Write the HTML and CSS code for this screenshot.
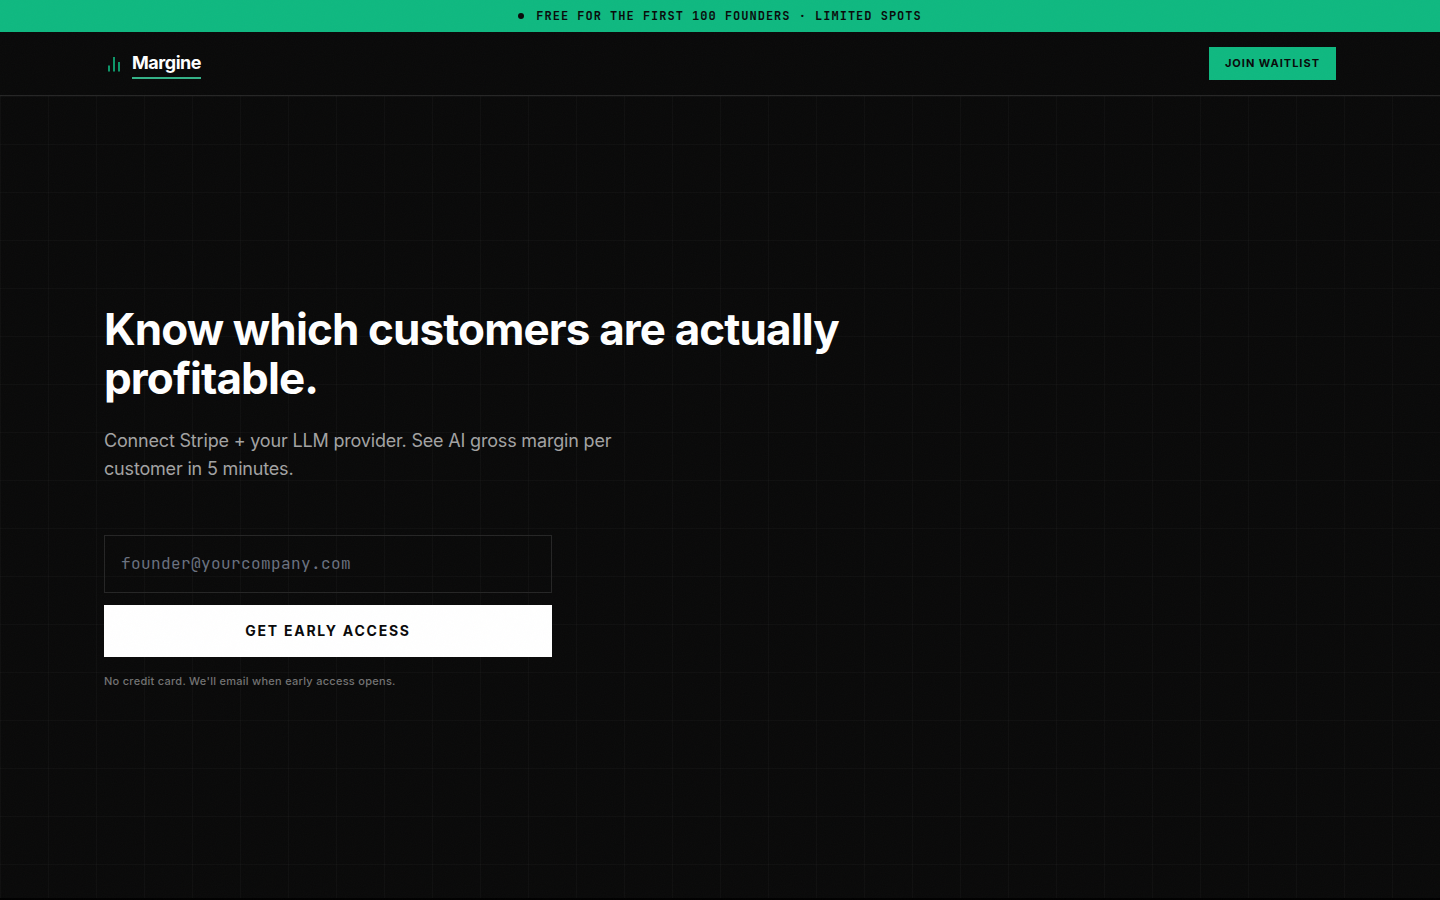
FILE: index.html
```
<!DOCTYPE html>
<html lang="en">
<head>
  <meta charset="UTF-8">
  <meta name="viewport" content="width=device-width, initial-scale=1.0">
  <title>Margine</title>
  <link rel="stylesheet" href="styles.css">
</head>
<body>

<div class="banner">
  <span class="dot"></span>
  <span>Free for the first 100 founders · Limited spots</span>
</div>

<header class="nav">
  <div class="container nav-inner">
    <a href="#" class="logo">
      <svg class="logo-icon" width="20" height="20" viewBox="0 0 20 20" aria-hidden="true">
        <path d="M5 11.500v6M10 3v14.500M15 8v9.500" fill="none" stroke="currentColor" stroke-width="2"/>
      </svg>
      <span class="logo-text">Margine</span>
    </a>
    <a href="#waitlist" class="nav-cta">Join waitlist</a>
  </div>
</header>

<main class="hero">
  <div class="container">
    <h1>Know which customers are actually profitable.</h1>
    <p class="lead">Connect Stripe + your LLM provider. See AI gross margin per customer in 5 minutes.</p>
    <form id="waitlist" class="waitlist">
      <input type="email" placeholder="founder@yourcompany.com" aria-label="Work email" required>
      <button type="submit">Get early access</button>
      <p class="note">No credit card. We'll email when early access opens.</p>
    </form>
  </div>
</main>

<!-- film grain over the whole page -->
<svg class="grain" aria-hidden="true">
  <filter id="noise">
    <feTurbulence type="fractalNoise" baseFrequency="0.9" numOctaves="4" stitchTiles="stitch"/>
  </filter>
  <rect width="100%" height="100%" filter="url(#noise)"/>
</svg>

</body>
</html>
```

FILE: styles.css
```
* { box-sizing: border-box; }
body {
  margin: 0;
  background: #000;
  color: #fff;
  font-family: Inter, sans-serif;
  overflow-x: hidden;
}
.container {
  width: 100%;
  max-width: 1280px;
  margin: 0 auto;
  padding: 0 24px;
}

.banner {
  display: flex;
  align-items: center;
  justify-content: center;
  gap: 12px;
  padding: 8px 16px;
  background: #10b981;
  color: #0a0a0a;
  font-family: "JetBrains Mono", "Liberation Mono", monospace;
  font-size: 12px;
  line-height: 16px;
  font-weight: 700;
  letter-spacing: 1px;
  text-transform: uppercase;
}
.dot {
  width: 6px;
  height: 6px;
  border-radius: 50%;
  background: #0a0a0a;
}

.nav {
  background: #0a0a0a;
  border-bottom: 1px solid #262626;
}
.nav-inner {
  display: flex;
  align-items: center;
  justify-content: space-between;
  height: 63px;
}
.logo {
  display: flex;
  align-items: center;
  gap: 8px;
  color: #fff;
  text-decoration: none;
}
.logo-icon {
  color: #10b981;
  opacity: 0.8;
}
.logo-text {
  border-bottom: 2px solid #34b388;
  font-size: 18px;
  line-height: 28px;
  font-weight: 700;
  letter-spacing: -0.025em;
}
.nav-cta {
  padding: 8px 16px;
  background: #10b981;
  color: #0a0a0a;
  font-size: 11px;
  line-height: 17px;
  font-weight: 700;
  letter-spacing: 1px;
  text-transform: uppercase;
  text-decoration: none;
}

.hero {
  display: flex;
  align-items: center;
  min-height: calc(100vh - 98px);
  background-color: #0a0a0a;
  background-image:
    linear-gradient(to right, rgba(255, 255, 255, 0.025) 1px, transparent 1px),
    linear-gradient(to bottom, rgba(255, 255, 255, 0.025) 1px, transparent 1px);
  background-size: 48px 48px;
}
h1 {
  max-width: 768px;
  margin: 0 0 24px;
  font-size: 44px;
  line-height: 49px;
  font-weight: 700;
  letter-spacing: -0.02em;
}
.lead {
  max-width: 576px;
  margin: 0 0 52px;
  color: #a3a3a3;
  font-size: 18px;
  line-height: 28px;
  letter-spacing: -0.01em;
}
.waitlist {
  display: flex;
  flex-direction: column;
  gap: 12px;
  max-width: 448px;
}
.waitlist input {
  height: 58px;
  padding: 0 16px 2px;
  background: transparent;
  border: 1px solid #262626;
  border-radius: 0;
  color: #fff;
  font-family: "JetBrains Mono", "Liberation Mono", monospace;
  font-size: 16px;
  letter-spacing: 0.025em;
}
.waitlist input::placeholder { color: #6b7280; }
.waitlist button {
  height: 52px;
  padding: 0 16px 2px;
  background: #fff;
  border: none;
  color: #0a0a0a;
  font-family: inherit;
  font-size: 14px;
  font-weight: 700;
  letter-spacing: 0.125em;
  text-transform: uppercase;
  cursor: pointer;
}
.waitlist button:hover { background: #e5e5e5; }
.note {
  margin: 4px 0 0;
  color: #737373;
  font-size: 11px;
  line-height: 16px;
  font-weight: 500;
  letter-spacing: 0.025em;
}

.grain {
  position: fixed;
  top: 0;
  left: 0;
  width: 100%;
  height: 100%;
  opacity: 0.02;
  pointer-events: none;
}
```
